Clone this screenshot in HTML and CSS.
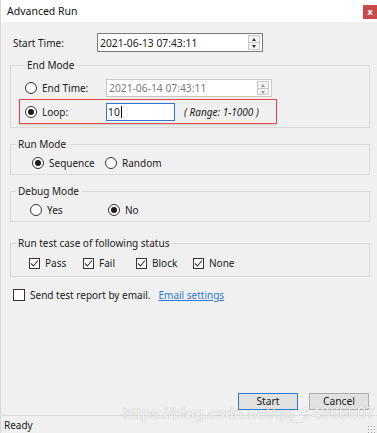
FILE: index.html
```html
<!DOCTYPE html>
<html>
<head>
<meta charset="utf-8">
<link rel="stylesheet" href="styles.css">
</head>
<body>
<div class="window">
  <div class="titlebar">
    <span class="title">Advanced Run</span>
    <span class="close">x</span>
  </div>
  <div class="content">
    <div class="row start-row">
      <span class="label">Start Time:</span>
      <div class="field datetime">
        <span class="value">2021-06-13 07:43:11</span>
        <span class="spin"><span class="up"></span><span class="down"></span></span>
      </div>
    </div>

    <fieldset class="group end-group">
      <legend>End Mode</legend>
      <div class="row end-row">
        <span class="radio"></span>
        <span class="rlabel">End Time:</span>
        <div class="field datetime disabled">
          <span class="value">2021-06-14 07:43:11</span>
          <span class="spin"><span class="up"></span><span class="down"></span></span>
        </div>
      </div>
      <div class="row loop-row">
        <span class="radio on"></span>
        <span class="rlabel">Loop:</span>
        <div class="field loop-field"><span class="value">10</span><span class="caret"></span></div>
        <span class="range">( Range: 1-1000 )</span>
      </div>
    </fieldset>

    <fieldset class="group run-group">
      <legend>Run Mode</legend>
      <div class="opts">
        <span class="opt seq"><span class="radio on"></span>Sequence</span>
        <span class="opt"><span class="radio"></span>Random</span>
      </div>
    </fieldset>

    <fieldset class="group debug-group">
      <legend>Debug Mode</legend>
      <div class="opts">
        <span class="opt yes"><span class="radio"></span>Yes</span>
        <span class="opt"><span class="radio on"></span>No</span>
      </div>
    </fieldset>

    <fieldset class="group status-group">
      <legend>Run test case of following status</legend>
      <div class="opts checks">
        <span class="opt c1"><span class="check on"><svg width="9" height="9" viewBox="0 0 9 9"><path d="M1 4.5 L3.5 7 L8 1.5" fill="none" stroke="#333" stroke-width="1.1"/></svg></span>Pass</span>
        <span class="opt c2"><span class="check on"><svg width="9" height="9" viewBox="0 0 9 9"><path d="M1 4.5 L3.5 7 L8 1.5" fill="none" stroke="#333" stroke-width="1.1"/></svg></span>Fail</span>
        <span class="opt c3"><span class="check on"><svg width="9" height="9" viewBox="0 0 9 9"><path d="M1 4.5 L3.5 7 L8 1.5" fill="none" stroke="#333" stroke-width="1.1"/></svg></span>Block</span>
        <span class="opt"><span class="check on"><svg width="9" height="9" viewBox="0 0 9 9"><path d="M1 4.5 L3.5 7 L8 1.5" fill="none" stroke="#333" stroke-width="1.1"/></svg></span>None</span>
      </div>
    </fieldset>

    <div class="row send-row">
      <span class="check"></span>
      <span class="send-label">Send test report by email.</span>
      <a class="link">Email settings</a>
    </div>

    <div class="buttons">
      <span class="btn primary">Start</span>
      <span class="btn">Cancel</span>
    </div>
  </div>
  <div class="statusbar">
    <span>Ready</span>
    <span class="grip"></span>
  </div>
  <div class="watermark">https://blog.csdn.net/qq_14866607</div>
</div>
</body>
</html>
```

FILE: styles.css
```css
* { box-sizing: border-box; }
html, body { margin: 0; padding: 0; }
body {
  width: 377px;
  height: 433px;
  overflow: hidden;
  background: #f0f0f0;
  font-family: "Noto Sans", "Open Sans", sans-serif;
  font-size: 10px;
  color: #1a1a1a;
}
.window {
  position: relative;
  height: 433px;
  display: flex;
  flex-direction: column;
  border-left: 1px solid #d8d8d8;
}
.titlebar {
  height: 22px;
  background: #fff;
  display: flex;
  align-items: center;
  justify-content: space-between;
  padding-left: 6px;
}
.title { font-size: 10.5px; color: #111; }
.close {
  width: 14px;
  height: 14px;
  margin-top: 2px;
  background: #c94a4a;
  color: #fff;
  font-size: 9px;
  line-height: 13px;
  text-align: center;
  font-weight: bold;
}
.content {
  flex: 1;
  padding: 11px 6px 0 9px;
  display: flex;
  flex-direction: column;
}
.row { display: flex; align-items: center; }
.start-row .label { width: 87px; padding-left: 3px; }
.field {
  position: relative;
  background: #fff;
  border: 1px solid #7a7a7a;
  height: 19px;
  display: flex;
  align-items: center;
  padding-left: 2px;
}
.datetime { width: 166px; font-size: 10.3px; }
.datetime.disabled { border-color: #c8c8c8; color: #7a7a7a; width: 166px; height: 18px; }
.spin {
  position: absolute;
  right: 2px;
  top: 1px;
  bottom: 1px;
  width: 12px;
  display: flex;
  flex-direction: column;
  border: 1px solid #c8c8c8;
  background: #f3f3f3;
}
.spin span { flex: 1; position: relative; }
.spin .up { border-bottom: 1px solid #c8c8c8; }
.spin .up::after, .spin .down::after {
  content: "";
  position: absolute;
  left: 3px;
  border-left: 2px solid transparent;
  border-right: 2px solid transparent;
}
.spin .up::after { top: 2px; border-bottom: 3px solid #333; }
.spin .down::after { top: 2px; border-top: 3px solid #333; }
.disabled .spin .up::after { border-bottom-color: #999; }
.disabled .spin .down::after { border-top-color: #999; }

.group {
  margin: 0;
  border: 1px solid #dadada;
  padding: 0;
  width: 360px;
}
.group legend {
  margin-left: 5px;
  padding: 0 2px;
  font-size: 10px;
  line-height: 14px;
}
.end-group { margin-top: 6px; padding: 6px 0 3px 9px; }
.radio {
  display: inline-block;
  width: 12px;
  height: 12px;
  border: 1px solid #333;
  border-radius: 50%;
  background: #fff;
  position: relative;
  flex: none;
}
.radio.on::after {
  content: "";
  position: absolute;
  left: 2px; top: 2px;
  width: 6px; height: 6px;
  border-radius: 50%;
  background: #1a1a1a;
}
.rlabel { margin-left: 5px; width: 64px; }
.end-row { padding-left: 5px; height: 20px; }
.loop-row {
  margin-top: 1px;
  margin-left: -1px;
  width: 258px;
  height: 25px;
  border: 1.5px solid #e04848;
  padding-left: 5px;
  box-shadow: 0 1px 2px rgba(0,0,0,0.15);
}
.loop-field {
  width: 69px;
  height: 18px;
  border-color: #2d7ad6;
  padding-left: 1px;
  font-size: 10.3px;
}
.caret { width: 1px; height: 12px; background: #000; margin-left: 1px; }
.range { margin-left: 9px; font-style: italic; font-size: 10px; }

.opts { display: flex; align-items: center; height: 22px; }
.opt { display: flex; align-items: center; }
.opt .radio, .opt .check { margin-right: 5px; }
.run-group { margin-top: 9px; }
.run-group .opts { padding-left: 21px; height: 23px; }
.run-group .seq { width: 73px; }
.debug-group { margin-top: 9px; }
.debug-group .opts { padding-left: 19px; height: 23px; }
.debug-group .yes { width: 78px; }
.status-group { margin-top: 14px; }
.status-group .opts { padding-left: 18px; height: 26px; }
.checks .c1 { width: 54px; }
.checks .c2 { width: 53px; }
.checks .c3 { width: 57px; }
.check {
  display: inline-flex;
  align-items: center;
  justify-content: center;
  width: 11px;
  height: 11px;
  border: 1px solid #333;
  background: #fff;
  flex: none;
}
.send-row { margin-top: 11px; padding-left: 3px; }
.send-row .check { margin-right: 5px; width: 12px; height: 12px; }
.send-label { margin-right: 8px; }
.link { color: #2a7ad0; text-decoration: underline; }

.buttons {
  margin-top: auto;
  margin-bottom: 5px;
  display: flex;
  justify-content: flex-end;
  gap: 11px;
  padding-right: 2px;
}
.btn {
  width: 60px;
  height: 17px;
  border: 1px solid #adadad;
  background: #e1e1e1;
  display: flex;
  align-items: center;
  justify-content: center;
  font-size: 10.3px;
  line-height: 13px;
}
.btn.primary { border: 1.5px solid #2a7ad6; }
.statusbar {
  height: 18px;
  border-top: 1px solid #dcdcdc;
  display: flex;
  align-items: center;
  justify-content: space-between;
  padding-left: 3px;
}
.grip {
  width: 8px; height: 8px;
  margin-right: 2px;
  margin-top: 8px;
  background-image: radial-gradient(circle, #a0a0a0 0.8px, transparent 1px);
  background-size: 3px 3px;
}
.watermark {
  position: absolute;
  left: 122px;
  top: 409px;
  font-family: "Liberation Sans", Arial, sans-serif;
  font-size: 16px;
  line-height: 10px;
  color: rgba(255,255,255,0.85);
  text-shadow: 0 0 1px rgba(120,120,120,0.6);
  letter-spacing: 0.2px;
}
```
